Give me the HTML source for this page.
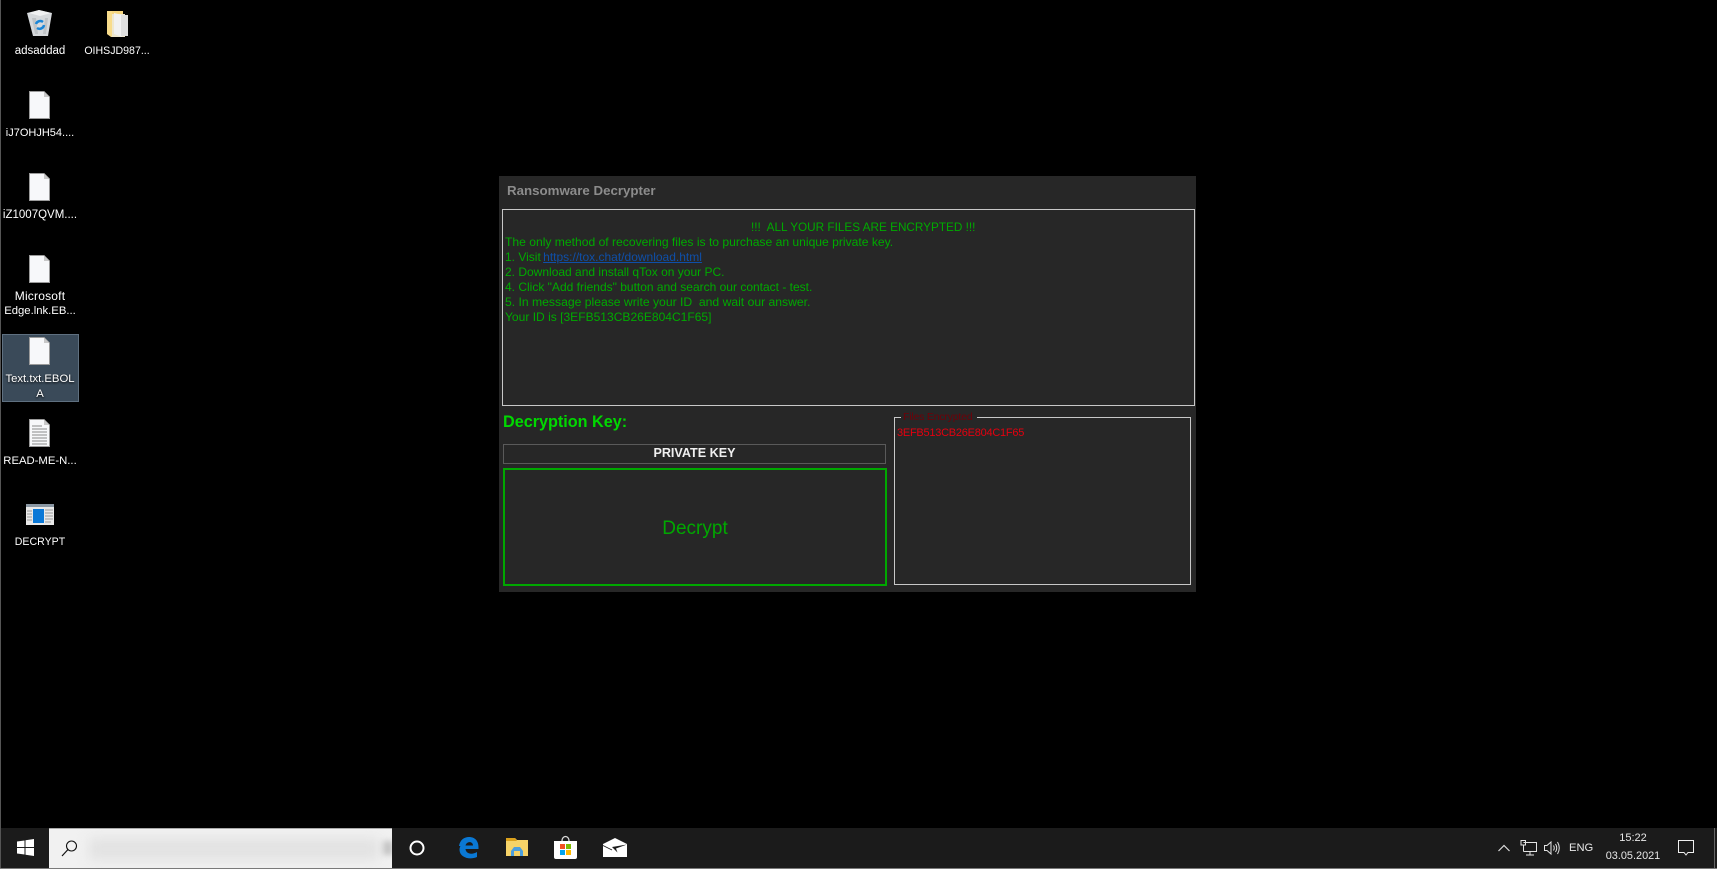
<!DOCTYPE html>
<html><head><meta charset="utf-8"><style>
html,body{margin:0;padding:0;background:#000;width:1717px;height:869px;overflow:hidden}
body{position:relative;font-family:"Liberation Sans",sans-serif}
.a{position:absolute;white-space:nowrap}
.l{position:absolute;width:80px;text-align:center;left:0;color:#fff;font-size:11.3px;line-height:15px;white-space:nowrap;text-shadow:0 1px 2px #000}
.g{color:#00aa00;font-size:12px;line-height:15px;left:505px}
svg{position:absolute;overflow:visible}
</style></head><body>
<div class="a" style="left:0;top:0;width:1px;height:869px;background:#555"></div>

<!-- desktop icons -->
<svg style="left:27px;top:9px" width="26" height="28" viewBox="0 0 26 28"><path d="M0 4L12 1L25 4L21 27L6 27Z" fill="#d6d9dc"/><path d="M2 4L12 1L24 4L13 7Z" fill="#f0f1f2"/><path d="M5 9L8 25H11L9 9ZM18 9L16 25H19L21 9Z" fill="#bfc3c6"/><path d="M9 15a4.500 4.500 0 0 1 7-2M17 16a4.500 4.500 0 0 1-7 3" fill="none" stroke="#1a86d8" stroke-width="2.500"/></svg>
<svg style="left:107px;top:10px" width="22" height="28" viewBox="0 0 22 28"><path d="M0 1H16V4L4 4V27L0 24Z" fill="#f6d67f"/><path d="M4 4H18V27H4Z" fill="#eee7cf"/><path d="M7 3L15 5V27L7 24Z" fill="#f1f1f1"/><path d="M14 5H21V26H14Z" fill="#dedede"/><path d="M0 1H5V27L0 24Z" fill="#f8dc8b"/></svg>

<svg style="left:29px;top:91px" width="21" height="28" viewBox="0 0 21 28"><path d="M.5.5H15L20.500 6V27.500H.5Z" fill="#f7f8fa" stroke="#9a9a9a"/><path d="M15 .5V6H20.500Z" fill="#c8c8c8"/></svg>
<svg style="left:29px;top:173px" width="21" height="28" viewBox="0 0 21 28"><path d="M.5.5H15L20.500 6V27.500H.5Z" fill="#f7f8fa" stroke="#9a9a9a"/><path d="M15 .5V6H20.500Z" fill="#c8c8c8"/></svg>
<svg style="left:29px;top:255px" width="21" height="28" viewBox="0 0 21 28"><path d="M.5.5H15L20.500 6V27.500H.5Z" fill="#f7f8fa" stroke="#9a9a9a"/><path d="M15 .5V6H20.500Z" fill="#c8c8c8"/></svg>

<div class="a" style="left:2px;top:334px;width:75px;height:66px;background:#3a4a59;border:1px solid #5f7080"></div>
<svg style="left:29px;top:337px" width="21" height="28" viewBox="0 0 21 28"><path d="M.5.5H15L20.500 6V27.500H.5Z" fill="#f7f8fa" stroke="#9a9a9a"/><path d="M15 .5V6H20.500Z" fill="#c8c8c8"/></svg>
<svg style="left:29px;top:419px" width="21" height="28" viewBox="0 0 21 28"><path d="M.5.5H15L20.500 6V27.500H.5Z" fill="#f7f8fa" stroke="#9a9a9a"/><path d="M15 .5V6H20.500Z" fill="#c8c8c8"/><path d="M3 7H13M3 10H18M3 13H18M3 16H18M3 19H18M3 22H18M3 25H18" stroke="#8a8a8a"/></svg>
<svg style="left:26px;top:504px" width="28" height="21" viewBox="0 0 28 21"><rect width="28" height="21" fill="#e9e9e9"/><rect width="28" height="3" fill="#8a97a3"/><rect x="7" y="5" width="11" height="14" fill="#0a78d7"/><path d="M1 7H6M1 10H6M1 13H6M1 16H6M19 6H27M19 9H27M19 12H27M19 15H27M19 18H25" stroke="#999"/></svg>

<div class="l" style="top:44px;font-size:11.500px">adsaddad</div>
<div class="l" style="top:44px;left:77px;width:80px;font-size:10.600px">OIHSJD987...</div>
<div class="l" style="top:126px;font-size:11px">iJ7OHJH54....</div>
<div class="l" style="top:208px;font-size:11.500px">iZ1007QVM....</div>
<div class="l" style="top:289px;font-size:12px;letter-spacing:.2px">Microsoft</div>
<div class="l" style="top:304px;font-size:11.300px">Edge.lnk.EB...</div>
<div class="l" style="top:372px">Text.txt.EBOL</div>
<div class="l" style="top:387px">A</div>
<div class="l" style="top:454px">READ-ME-N...</div>
<div class="l" style="top:535px;font-size:10.600px">DECRYPT</div>

<!-- window -->
<div class="a" style="left:499px;top:176px;width:697px;height:416px;background:#272727"></div>
<div class="a" style="left:507px;top:183px;color:#8c8c8c;font-weight:bold;font-size:13.300px;line-height:16px">Ransomware Decrypter</div>
<div class="a" style="left:502px;top:209px;width:691px;height:195px;border:1px solid #c8c8c8"></div>
<div class="a g" style="left:751px;top:220px;font-size:11.750px">!!!&nbsp; ALL YOUR FILES ARE ENCRYPTED !!!</div>
<div class="a g" style="top:235px;font-size:12.120px">The only method of recovering files is to purchase an unique private key.</div>
<div class="a g" style="top:250px">1. Visit <span style="color:#0f4fa8;text-decoration:underline;margin-left:-1px">https://tox.chat/download.html</span></div>
<div class="a g" style="top:265px">2. Download and install qTox on your PC.</div>
<div class="a g" style="top:280px">4. Click "Add friends" button and search our contact - test.</div>
<div class="a g" style="top:295px;font-size:12.170px">5. In message please write your ID&nbsp; and wait our answer.</div>
<div class="a g" style="top:310px;font-size:12.050px">Your ID is [3EFB513CB26E804C1F65]</div>

<div class="a" style="left:503px;top:412px;color:#00d800;font-weight:bold;font-size:16.200px;line-height:20px">Decryption Key:</div>
<div class="a" style="left:503px;top:444px;width:381px;height:18px;border:1px solid #5a5a5a;color:#f0f0f0;font-weight:bold;font-size:12.600px;line-height:16px;text-align:center">PRIVATE KEY</div>
<div class="a" style="left:503px;top:468px;width:380px;height:114px;border:2px solid #00a800;color:#00a800;font-size:19px;line-height:118px;text-align:center">Decrypt</div>

<div class="a" style="left:894px;top:417px;width:295px;height:166px;border:1px solid #c8c8c8"></div>
<div class="a" style="left:901px;top:410px;width:76px;background:#272727;color:#6e0008;font-size:10.500px;letter-spacing:-.2px;line-height:15px;text-indent:2px">Files Encrypted</div>
<div class="a" style="left:897px;top:426px;color:#e4000f;font-size:11px;letter-spacing:-.25px;line-height:15px">3EFB513CB26E804C1F65</div>

<!-- taskbar -->
<div class="a" style="left:1px;top:828px;width:1716px;height:40px;background:#1b1b1b"></div>
<div class="a" style="left:0;top:868px;width:1717px;height:1px;background:#7a7a7a"></div>
<div class="a" style="left:49px;top:828px;width:343px;height:40px;background:#f1f1f1;overflow:hidden;border-top:1px solid #aaa;box-sizing:border-box">
<div class="a" style="left:40px;top:9px;width:290px;height:22px;background:#e2e2e2;filter:blur(6px)"></div>
<div class="a" style="left:334px;top:12px;width:10px;height:14px;background:#c4c4c4;filter:blur(3px)"></div></div>
<div class="a" style="left:1714px;top:828px;width:1px;height:40px;background:#666"></div>

<svg style="left:17px;top:839px" width="17" height="17" viewBox="0 0 17 17"><path d="M0 2.500L7.500 1.500V8H0ZM8.500 1.300L17 0V8H8.500ZM0 9H7.500V15.500L0 14.500ZM8.500 9H17V17L8.500 15.700Z" fill="#fff"/></svg>
<svg style="left:61px;top:840px" width="17" height="17" viewBox="0 0 17 17"><circle cx="10.500" cy="6" r="5" fill="none" stroke="#111" stroke-width="1.100"/><path d="M7 9.500L1 16" stroke="#111" stroke-width="1.200"/></svg>
<svg style="left:409px;top:840px" width="16" height="16" viewBox="0 0 16 16"><circle cx="8" cy="8" r="6.500" fill="none" stroke="#fff" stroke-width="2"/></svg>
<svg style="left:458px;top:837px" width="21" height="22" viewBox="0 0 21 22"><path d="M1 9C2 3 6 0 11 0C17 0 21 4 20.500 12H7.500C8 17 14 18 19 15V20C12 23 2 21 1.500 13C1.500 9 4 6 7 4C5 5.500 4 7 3.500 9ZM7.500 8.500H15C15 4 8.500 4 7.500 8.500Z" fill="#0a78d4"/></svg>
<svg style="left:506px;top:838px" width="22" height="19" viewBox="0 0 22 19"><path d="M0 0H9L11 2H22V18H0Z" fill="#f6d368"/><path d="M0 0H9L11 3H0Z" fill="#dba11c"/><path d="M5 13L8 9H14L17 13V18H14V13H8V18H5Z" fill="#4c9fde"/></svg>
<svg style="left:554px;top:836px" width="23" height="23" viewBox="0 0 23 23"><path d="M0 5H23V21Q23 23 21 23H2Q0 23 0 21Z" fill="#fff"/><path d="M8 5C8 -1 15 -1 15 5" fill="none" stroke="#ddd" stroke-width="1.300"/><rect x="6" y="8" width="5" height="5" fill="#f25022"/><rect x="12" y="8" width="5" height="5" fill="#7fba00"/><rect x="6" y="14" width="5" height="5" fill="#00a4ef"/><rect x="12" y="14" width="5" height="5" fill="#ffb900"/></svg>
<svg style="left:603px;top:838px" width="24" height="19" viewBox="0 0 24 19"><path d="M0 6L12 0L24 6V19H0Z" fill="#fff"/><path d="M24 6.500L9 9L14.500 14.500L13 10.500Z" fill="#1b1b1b"/><path d="M0 7.500L9 12" fill="none" stroke="#1b1b1b" stroke-width=".8"/></svg>

<svg style="left:1498px;top:844px" width="12" height="8" viewBox="0 0 12 8"><path d="M.5 7L6 1.500L11.500 7" fill="none" stroke="#ddd" stroke-width="1.200"/></svg>
<svg style="left:1520px;top:840px" width="17" height="16" viewBox="0 0 17 16"><path d="M3.500 2.500H16.500V11.500H3.500M1 .5H5.500V5H1ZM3.500 5V11.500M10 11.500V14.500M6 15H14" fill="none" stroke="#e4e4e4"/></svg>
<svg style="left:1544px;top:841px" width="17" height="14" viewBox="0 0 17 14"><path d="M.5 4.500H3L7 1V13L3 9.500H.5ZM9.500 4.500Q11 7 9.500 9.500M11.500 3Q14 7 11.500 11M13.500 1Q17 7 13.500 13" fill="none" stroke="#e4e4e4"/></svg>
<div class="a" style="left:1569px;top:841px;color:#e8e8e8;font-size:11.200px;line-height:15px">ENG</div>
<div class="a" style="left:1601px;width:64px;text-align:center;top:831px;color:#e8e8e8;font-size:11px;line-height:15px">15:22</div>
<div class="a" style="left:1601px;width:64px;text-align:center;top:849px;color:#e8e8e8;font-size:10.900px;line-height:15px">03.05.2021</div>
<svg style="left:1678px;top:840px" width="16" height="16" viewBox="0 0 16 16"><path d="M.5.500H15.500V12.500H10L8 15L6 12.500H.5Z" fill="none" stroke="#f0f0f0"/></svg>
</body></html>
